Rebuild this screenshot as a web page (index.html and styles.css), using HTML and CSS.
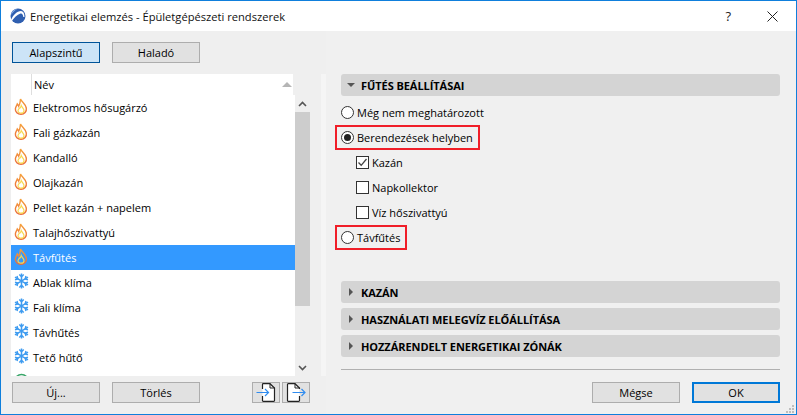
FILE: index.html
```html
<!DOCTYPE html>
<html lang="hu">
<head>
<meta charset="utf-8">
<title>Energetikai elemzés</title>
<link rel="stylesheet" href="styles.css">
</head>
<body>
<svg class="defs" width="0" height="0" aria-hidden="true">
  <defs>
    <linearGradient id="flame-stroke" x1="0" y1="0" x2="0" y2="1">
      <stop offset="0" stop-color="#f6a23a"/>
      <stop offset="1" stop-color="#ea6a3a"/>
    </linearGradient>
    <g id="flame">
      <path d="M6.500 1C7.500 3.800 11.500 5.800 12.300 10C12.900 13.800 10.300 16.300 7 16.300C3.700 16.300 1.100 14 1.400 10.700C1.600 8.700 2.700 7.800 3.300 6C4 6.800 4.300 7.500 4.700 8.300C5.800 6 6.400 3.500 6.500 1Z" stroke="url(#flame-stroke)" stroke-width="1.400"/>
      <path d="M7.200 7.500C8 9.500 10 10.600 10 12.700C10 14.300 8.600 15.200 7 15.200C5.400 15.200 4 14.300 4 12.800C4 11.600 5 11 5.500 10C6.100 10.300 6.900 9 7.200 7.500Z" fill="none" stroke="#f8d850" stroke-width="1.200"/>
    </g>
    <g id="snow" stroke="#3d9bf0" stroke-width="1.500" fill="none">
      <path d="M7.500 0.500V15.500M1 4.200L14 11.800M14 4.200L1 11.800"/>
      <path d="M5.300 1.500L7.500 3.700L9.700 1.500M5.300 14.500L7.500 12.300L9.700 14.500M1 6.800L3.800 6L3 3M14 6.800L11.200 6L12 3M1 9.200L3.800 10L3 13M14 9.200L11.200 10L12 13"/>
    </g>
  </defs>
</svg>
<div class="window">
  <header class="titlebar">
    <svg class="logo" width="16" height="16" viewBox="0 0 16 16">
      <circle cx="8" cy="8" r="7.500" fill="#2f5fb0"/>
      <path d="M1 12C3 7 7 3 11 3C13 3 14.500 5 14.500 9L13.300 9C13 6.500 12 5 10.500 5.500C7 6.500 4 10 1.800 13Z" fill="#fff"/>
      <path d="M1 7C2 3 5 1 8 .8C5 2 3 4 1 7Z" fill="#8fb4e8"/>
    </svg>
    <span class="title">Energetikai elemzés - Épületgépészeti rendszerek</span>
    <span class="help">?</span>
    <svg class="close" width="11" height="11" viewBox="0 0 11 11"><path d="M.5 .5L10.500 10.500M10.500 .5L.5 10.500" stroke="#222" stroke-width="1" fill="none"/></svg>
  </header>
  <main class="content">
    <section class="left">
      <div class="tabs">
        <button class="btn btn-active">Alapszintű</button>
        <button class="btn">Haladó</button>
      </div>
      <div class="listbox">
        <div class="list-main">
          <div class="list-head">
            <span class="head-label">Név</span>
            <span class="sort"></span>
          </div>
          <ul class="rows">
            <li class="row"><svg class="ico-f" width="14" height="18" viewBox="0 0 14 18"><use href="#flame"/></svg><span>Elektromos hősugárzó</span></li>
            <li class="row"><svg class="ico-f" width="14" height="18" viewBox="0 0 14 18"><use href="#flame"/></svg><span>Fali gázkazán</span></li>
            <li class="row"><svg class="ico-f" width="14" height="18" viewBox="0 0 14 18"><use href="#flame"/></svg><span>Kandalló</span></li>
            <li class="row"><svg class="ico-f" width="14" height="18" viewBox="0 0 14 18"><use href="#flame"/></svg><span>Olajkazán</span></li>
            <li class="row"><svg class="ico-f" width="14" height="18" viewBox="0 0 14 18"><use href="#flame"/></svg><span>Pellet kazán + napelem</span></li>
            <li class="row"><svg class="ico-f" width="14" height="18" viewBox="0 0 14 18"><use href="#flame"/></svg><span>Talajhőszivattyú</span></li>
            <li class="row row-sel"><svg class="ico-f" width="14" height="18" viewBox="0 0 14 18"><use href="#flame"/></svg><span>Távfűtés</span></li>
            <li class="row"><svg class="ico-s" width="15" height="16" viewBox="0 0 15 16"><use href="#snow"/></svg><span>Ablak klíma</span></li>
            <li class="row"><svg class="ico-s" width="15" height="16" viewBox="0 0 15 16"><use href="#snow"/></svg><span>Fali klíma</span></li>
            <li class="row"><svg class="ico-s" width="15" height="16" viewBox="0 0 15 16"><use href="#snow"/></svg><span>Távhűtés</span></li>
            <li class="row"><svg class="ico-s" width="15" height="16" viewBox="0 0 15 16"><use href="#snow"/></svg><span>Tető hűtő</span></li>
            <li class="row"><svg class="ico-s" width="15" height="16" viewBox="0 0 15 16"><circle cx="7.500" cy="8" r="6.500" fill="none" stroke="#3aa66a" stroke-width="1.500"/></svg></li>
          </ul>
        </div>
        <div class="scrollbar">
          <svg class="sb-arrow" width="9" height="6" viewBox="0 0 9 6"><path d="M1 5L4.500 1.500L8 5" fill="none" stroke="#555" stroke-width="1.600"/></svg>
          <div class="sb-thumb"></div>
          <svg class="sb-arrow sb-down" width="9" height="6" viewBox="0 0 9 6"><path d="M1 1L4.500 4.500L8 1" fill="none" stroke="#555" stroke-width="1.600"/></svg>
        </div>
      </div>
      <div class="left-foot">
        <button class="btn">Új...</button>
        <button class="btn">Törlés</button>
        <div class="icon-btns">
          <button class="btn btn-icon"><svg width="20" height="19" viewBox="0 0 20 19"><path d="M6.500 1.500A.8 .8 0 0 1 7.300 .7H14L18.500 5V17.500A.8 .8 0 0 1 17.700 18.300H7.300A.8 .8 0 0 1 6.500 17.500Z" fill="#fff"/><path d="M6.500 6V1.500A.8 .8 0 0 1 7.300 .7H14L18.500 5V17.500A.8 .8 0 0 1 17.700 18.300H7.300A.8 .8 0 0 1 6.500 17.500V13" fill="none" stroke="#222" stroke-width="1.200"/><path d="M14 .7V5H18.500" fill="none" stroke="#222"/><path d="M.5 9.500H12.500M9 6L12.500 9.500L9 13" fill="none" stroke="#2f8cf0" stroke-width="1.200"/></svg></button>
          <button class="btn btn-icon"><svg width="20" height="19" viewBox="0 0 20 19"><path d="M1.500 1.500A.8 .8 0 0 1 2.300 .7H9L13.500 5V17.500A.8 .8 0 0 1 12.700 18.300H2.300A.8 .8 0 0 1 1.500 17.500Z" fill="#fff"/><path d="M13.500 6V5L9 .7H2.300A.8 .8 0 0 0 1.500 1.500V17.500A.8 .8 0 0 0 2.300 18.300H12.700A.8 .8 0 0 0 13.500 17.500V13" fill="none" stroke="#222" stroke-width="1.200"/><path d="M9 .7V5H13.500" fill="none" stroke="#222"/><path d="M6.500 9.500H19M15.500 6L19 9.500L15.500 13" fill="none" stroke="#2f8cf0" stroke-width="1.200"/></svg></button>
        </div>
      </div>
    </section>
    <div class="sash"></div>
    <section class="right">
      <div class="panel-head panel-open"><span class="tri-down"></span><span>FŰTÉS BEÁLLÍTÁSAI</span></div>
      <div class="options">
        <label class="opt"><span class="radio"></span><span>Még nem meghatározott</span></label>
        <label class="opt opt-marked"><span class="radio radio-on"></span><span>Berendezések helyben</span></label>
        <label class="opt opt-sub"><span class="check"><svg width="13" height="13" viewBox="0 0 13 13"><path d="M2.500 6.500L5.200 9.300L10.500 3" fill="none" stroke="#444" stroke-width="1.300"/></svg></span><span>Kazán</span></label>
        <label class="opt opt-sub"><span class="check"></span><span>Napkollektor</span></label>
        <label class="opt opt-sub"><span class="check"></span><span>Víz hőszivattyú</span></label>
        <label class="opt opt-marked"><span class="radio"></span><span>Távfűtés</span></label>
      </div>
      <div class="panels">
        <div class="panel-head"><span class="tri-right"></span><span>KAZÁN</span></div>
        <div class="panel-head"><span class="tri-right"></span><span>HASZNÁLATI MELEGVÍZ ELŐÁLLÍTÁSA</span></div>
        <div class="panel-head"><span class="tri-right"></span><span>HOZZÁRENDELT ENERGETIKAI ZÓNÁK</span></div>
      </div>
      <div class="right-foot">
        <button class="btn">Mégse</button>
        <button class="btn btn-default">OK</button>
      </div>
    </section>
  </main>
  <svg class="grip" width="11" height="10" viewBox="0 0 11 10"><path d="M7 1h2v2h-2zM4 4h2v2h-2zM7 4h2v2h-2zM1 7h2v2h-2zM4 7h2v2h-2zM7 7h2v2h-2z" fill="#bdbdbd"/></svg>
</div>
</body>
</html>
```

FILE: styles.css
```css
* { box-sizing: border-box; }
html, body { margin: 0; padding: 0; }
body {
  font-family: "Open Sans", "Noto Sans", sans-serif;
  font-size: 11px;
  color: #000;
}
.defs { position: absolute; }
.window {
  position: relative;
  width: 797px;
  height: 415px;
  border: 1px solid #0f7fdc;
  background: #efefef;
  display: flex;
  flex-direction: column;
  overflow: hidden;
}
.titlebar {
  height: 30px;
  flex: none;
  background: #fff;
  display: flex;
  align-items: center;
  padding: 0 18px 0 9px;
}
.logo { flex: none; margin-right: 4px; }
.title { font-size: 11.15px; flex: 1; color: #111; }
.help { font-size: 13px; margin-right: 36px; color: #222; }
.content {
  flex: 1;
  display: flex;
  min-height: 0;
}
.left {
  width: 320px;
  flex: none;
  padding: 11px 0 0 10px;
  display: flex;
  flex-direction: column;
}
.btn {
  width: 88px;
  height: 21px;
  padding: 0;
  border: 1px solid #adadad;
  border-radius: 0;
  background: #e1e1e1;
  font: 11px "Open Sans", "Noto Sans", sans-serif;
  color: #000;
  display: flex;
  align-items: center;
  justify-content: center;
}
.btn-active { background: #cce4f7; border-color: #005499; }
.btn-default { border: 2px solid #0078d7; }
.tabs { display: flex; gap: 12px; padding-left: 1px; }
.listbox {
  margin-top: 11px;
  height: 302px;
  width: 299px;
  display: flex;
}
.list-main {
  width: 284px;
  flex: none;
  display: flex;
  flex-direction: column;
  overflow: hidden;
}
.list-head {
  height: 21px;
  width: 282px;
  flex: none;
  background: #fff;
  display: flex;
  align-items: center;
  padding-left: 20px;
}
.head-label {
  border-left: 1px solid #dedede;
  padding-left: 2px;
  height: 21px;
  line-height: 21px;
  flex: 1;
}
.sort {
  width: 0;
  height: 0;
  border-left: 5px solid transparent;
  border-right: 5px solid transparent;
  border-bottom: 5px solid #b5b5b5;
  margin-right: 1px;
}
.rows { list-style: none; margin: 0; padding: 0; flex: 1; background: #fff; overflow: hidden; }
.row {
  height: 25px;
  display: flex;
  align-items: center;
  position: relative;
  padding-left: 22px;
}
.row-sel { background: #3399ff; color: #fff; }
.ico-f { position: absolute; left: 3px; top: 3px; fill: #fff; }
.row-sel .ico-f { fill: none; }
.ico-s { position: absolute; left: 3px; top: 3px; }
.scrollbar {
  width: 15px;
  flex: none;
  display: flex;
  flex-direction: column;
  align-items: center;
  padding-top: 27px;
}
.sb-thumb { width: 15px; height: 194px; background: #cdcdcd; margin-top: 5px; flex: none; }
.sb-down { margin-top: 59px; }
.left-foot {
  margin-top: 6px;
  display: flex;
  gap: 12px;
  padding-left: 1px;
  width: 299px;
}
.icon-btns { margin-left: auto; display: flex; gap: 2px; }
.btn-icon { width: 28px; }
.sash {
  width: 5px;
  flex: none;
  height: 302px;
  margin-top: 43px;
  background: #f5f5f5;
}
.right {
  flex: 1;
  padding: 43px 16px 0 15px;
  display: flex;
  flex-direction: column;
  min-width: 0;
  background: #f0f0f0;
}
.panel-head {
  height: 22px;
  flex: none;
  background: #d4d4d4;
  border-radius: 3px;
  display: flex;
  align-items: center;
  font-weight: 700;
  padding-left: 8px;
  letter-spacing: -0.06px;
}
.panel-open { padding-left: 6px; }
.tri-down {
  width: 0; height: 0;
  border-left: 4px solid transparent;
  border-right: 4px solid transparent;
  border-top: 4px solid #555;
  margin-right: 6px;
}
.tri-right {
  width: 0; height: 0;
  border-top: 4px solid transparent;
  border-bottom: 4px solid transparent;
  border-left: 4px solid #555;
  margin-right: 8px;
}
.options { margin-top: 4px; display: flex; flex-direction: column; align-items: flex-start; }
.opt { height: 25px; display: flex; align-items: center; gap: 3px; }
.opt-sub { padding-left: 15px; }
.opt-marked { outline: 2px solid #f01e28; outline-offset: -2px; margin-left: -6px; padding: 0 7px 0 6px; }
.radio {
  width: 13px; height: 13px;
  border: 1px solid #333;
  border-radius: 50%;
  background: #fff;
  position: relative;
  flex: none;
}
.radio-on::after {
  content: "";
  position: absolute;
  left: 2px; top: 2px;
  width: 7px; height: 7px;
  border-radius: 50%;
  background: #222;
}
.check {
  width: 13px; height: 13px;
  border: 1px solid #333;
  background: #fff;
  flex: none;
  position: relative;
}
.check svg { position: absolute; left: -1px; top: -1px; }
.panels { margin-top: 31px; display: flex; flex-direction: column; gap: 5px; }
.right-foot {
  margin-top: 12px;
  border-top: 1px solid #b0b0b0;
  padding-top: 12px;
  display: flex;
  justify-content: flex-end;
  gap: 12px;
}
.grip { position: absolute; right: 0; bottom: 0; }
```
